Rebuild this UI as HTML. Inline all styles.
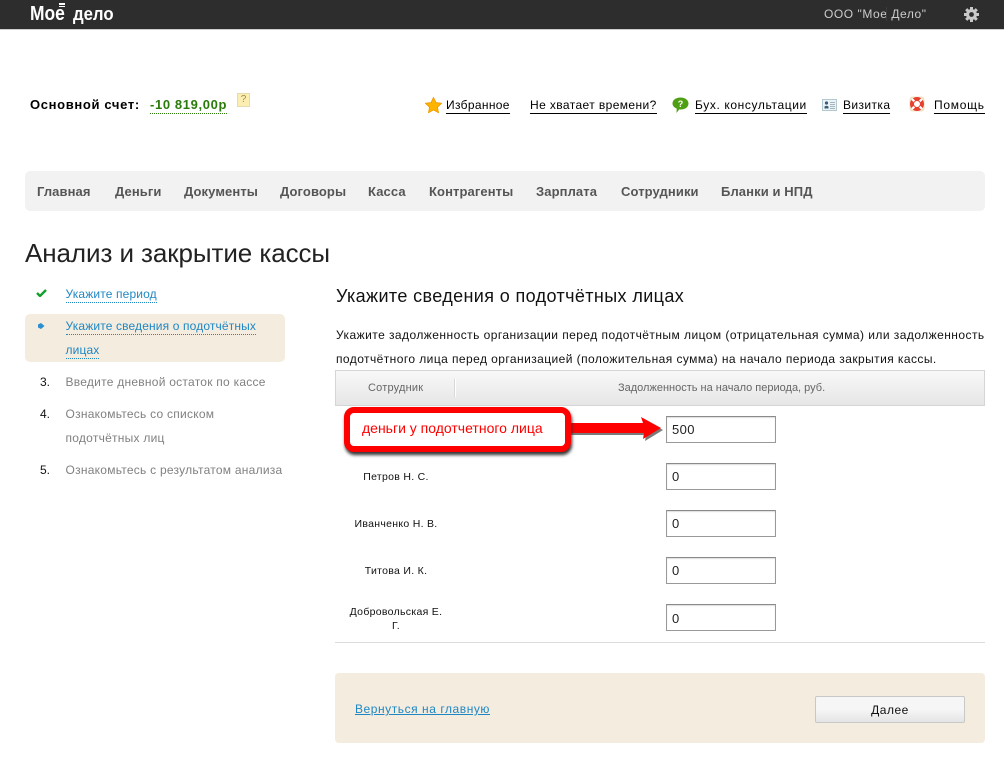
<!DOCTYPE html>
<html><head><meta charset="utf-8">
<style>
html,body{margin:0;padding:0;background:#fff;width:1004px;height:759px;overflow:hidden}
body{position:relative;font-family:"Liberation Sans",sans-serif;color:#000}
.t{position:absolute;white-space:nowrap;line-height:16px}
.b{position:absolute;box-sizing:border-box}
.top{font-size:12px;border-bottom:1px solid #000;line-height:14px;height:15px}
.nav{font-size:13px;font-weight:bold;color:#555;letter-spacing:.1px;top:184px}
.s{font-size:12px;letter-spacing:.25px;color:#808080}
.l{font-size:12px;letter-spacing:.14px;color:#1f87c4;line-height:14px;height:15px;border-bottom:1px dotted #1f87c4}
.n{font-size:12px;color:#111;left:40px}
.p{font-size:12px;letter-spacing:.45px;color:#111}
.e{font-size:10.5px;letter-spacing:.3px;text-align:center;left:336px;width:120px;color:#111}
.i{position:absolute;box-sizing:border-box;left:666px;width:110px;height:27px;border:1px solid #999;border-top-color:#8a8a8a;box-shadow:inset 0 1px 1px #ddd;background:#fff;font-size:13px;line-height:25px;padding-left:5px;color:#222;letter-spacing:.4px}
</style></head><body>
<div class="b" style="left:0;top:0;width:1004px;height:30px;background:#2d2d2d;border-bottom:1px solid #ccc"></div>
<div class="t" style="left:30px;top:3px;font-size:20px;font-weight:bold;color:#fff;line-height:23px;transform:scaleX(.87);transform-origin:0 0">Мое</div>
<div class="t" style="left:73px;top:4px;font-size:18px;font-weight:bold;color:#fff;line-height:21px;transform:scaleX(.93);transform-origin:0 0">дело</div>
<div class="b" style="left:59px;top:3px;width:6px;height:1.500px;background:#fff"></div>
<div class="b" style="left:59px;top:5.500px;width:6px;height:1.500px;background:#fff"></div>
<div class="t" style="left:824px;top:6px;font-size:12px;color:#ccc;letter-spacing:.55px">ООО "Мое Дело"</div>
<div class="b" style="left:886px;top:7px;width:1px;height:14px;background:#3c3c3c"></div>
<svg style="position:absolute;left:962.500px;top:5.500px" width="17" height="17" viewBox="0 0 17 17"><circle cx="8.5" cy="8.5" r="3.9" fill="none" stroke="#c8c8c8" stroke-width="3"/><g stroke="#c8c8c8" stroke-width="3"><path d="M8.5 1v3M8.5 13v3M1 8.5h3M13 8.5h3M3.2 3.2l2 2M11.800 11.800l2 2M3.200 13.800l2-2M11.800 5.200l2-2"/></g></svg>

<div class="t" style="left:30px;top:97px;font-size:13px;font-weight:bold;letter-spacing:.65px">Основной счет:</div>
<div class="t" style="left:150px;top:97px;font-size:13px;font-weight:bold;color:#2a7a0c;letter-spacing:.63px;height:16px;border-bottom:1px dotted #2a7a0c">-10 819,00р</div>
<div class="b" style="left:237px;top:93px;width:13px;height:14px;background:#fbeeb0;border:1px solid #e4dcae;font-size:10px;line-height:12px;text-align:center;color:#a08d45">?</div>

<svg style="position:absolute;left:425px;top:97px" width="17" height="16" viewBox="0 0 19 18"><path d="M9.500 .5l2.700 5.800 6.300.8-4.600 4.300 1.200 6.200-5.600-3.100-5.600 3.100 1.200-6.200L.5 7.100l6.300-.8z" fill="#ffb400" stroke="#f09a00"/></svg>
<div class="t top" style="left:446px;top:98px;letter-spacing:.33px">Избранное</div>
<div class="t top" style="left:530px;top:98px;letter-spacing:.4px">Не хватает времени?</div>
<svg style="position:absolute;left:671px;top:97px" width="19" height="17" viewBox="0 0 18 17"><path d="M9 .5c4.700 0 8 2.500 8 6s-3.300 6-7.500 6c-.7 0-1.300 0-1.800-.1L5 16l.2-4.500C2.500 10.500 1 8.700 1 6.500 1 3 4.300.5 9 .5z" fill="#4f9f12"/><text x="9" y="10" font-size="9" font-weight="bold" fill="#fff" text-anchor="middle" font-family="Liberation Sans">?</text></svg>
<div class="t top" style="left:695px;top:98px;letter-spacing:.62px">Бух. консультации</div>
<svg style="position:absolute;left:822px;top:99px" width="15" height="12" viewBox="0 0 15 12"><rect x=".5" y=".5" width="14" height="11" fill="#eaf3f6" stroke="#b4c8d0"/><circle cx="4.500" cy="4" r="1.600" fill="#3f5a78"/><path d="M2.500 9.500V7.500q2-1.500 4 0v2z" fill="#3f5a78"/><path d="M8 3.500h5M8 5.500h5M8 7.500h5M8 9.500h5" stroke="#a6b4bc"/></svg>
<div class="t top" style="left:843px;top:98px;letter-spacing:.4px">Визитка</div>
<svg style="position:absolute;left:909px;top:96px" width="16" height="16" viewBox="0 0 16 16"><rect x=".5" y=".5" width="15" height="15" rx="3" fill="#f3e3c6"/><circle cx="8" cy="8" r="5" fill="#fff" stroke="#e8402f" stroke-width="4"/><path d="M3 3l2.300 2.300M13 3l-2.300 2.300M3 13l2.300-2.300M13 13l-2.300-2.300" stroke="#fff" stroke-width="2.200"/></svg>
<div class="t top" style="left:934px;top:98px;letter-spacing:.72px">Помощь</div>

<div class="b" style="left:25px;top:171px;width:960px;height:40px;background:#f2f2f2;border-radius:5px"></div>
<div class="t nav" style="left:37px">Главная</div>
<div class="t nav" style="left:115px">Деньги</div>
<div class="t nav" style="left:184px">Документы</div>
<div class="t nav" style="left:280px">Договоры</div>
<div class="t nav" style="left:368px">Касса</div>
<div class="t nav" style="left:429px">Контрагенты</div>
<div class="t nav" style="left:536px">Зарплата</div>
<div class="t nav" style="left:621px">Сотрудники</div>
<div class="t nav" style="left:721px">Бланки и НПД</div>

<div class="t" style="left:25px;top:238px;font-size:26px;line-height:30px;color:#222;letter-spacing:-.08px">Анализ и закрытие кассы</div>

<div class="b" style="left:25px;top:314px;width:260px;height:48px;background:#f3ecdf;border-radius:5px"></div>
<svg style="position:absolute;left:36px;top:289px" width="11" height="8" viewBox="0 0 11 8"><path d="M1 4l3 3 6-6" fill="none" stroke="#12a02c" stroke-width="2.400"/></svg>
<svg style="position:absolute;left:37px;top:322px" width="8" height="8" viewBox="0 0 8 8"><path d="M4 1l3.500 3L4 7 1 5.500V2.500z" fill="#2b8fd0"/></svg>
<div class="t l" style="left:65.500px;top:287px">Укажите период</div>
<div class="t l" style="left:65.500px;top:319px">Укажите сведения о подотчётных</div>
<div class="t l" style="left:65.500px;top:343px">лицах</div>
<div class="t n" style="top:374px">3.</div>
<div class="t s" style="left:65.500px;top:374px">Введите дневной остаток по кассе</div>
<div class="t n" style="top:406px">4.</div>
<div class="t s" style="left:65.500px;top:406px">Ознакомьтесь со списком</div>
<div class="t s" style="left:65.500px;top:430px">подотчётных лиц</div>
<div class="t n" style="top:462px">5.</div>
<div class="t s" style="left:65.500px;top:462px">Ознакомьтесь с результатом анализа</div>

<div class="t" style="left:336px;top:286px;font-size:18px;line-height:20px;color:#111;letter-spacing:.38px">Укажите сведения о подотчётных лицах</div>
<div class="t p" style="left:336px;top:327px">Укажите задолженность организации перед подотчётным лицом (отрицательная сумма) или задолженность</div>
<div class="t p" style="left:336px;top:351px;letter-spacing:.43px">подотчётного лица перед организацией (положительная сумма) на начало периода закрытия кассы.</div>

<div class="b" style="left:335px;top:370px;width:650px;height:36px;border:1px solid #d5d5d5;background:linear-gradient(#f8f8f8,#e6e6e6)"></div>
<div class="b" style="left:454px;top:379px;width:1px;height:18px;background:#d8d8d8;box-shadow:1px 0 0 #fff"></div>
<div class="t" style="left:368px;top:380px;font-size:11px;color:#666;letter-spacing:.2px">Сотрудник</div>
<div class="t" style="left:618px;top:380px;font-size:11px;color:#666">Задолженность на начало периода, руб.</div>

<div class="t e" style="top:469px">Петров Н. С.</div>
<div class="t e" style="top:516px">Иванченко Н. В.</div>
<div class="t e" style="top:563px">Титова И. К.</div>
<div class="t e" style="top:604px">Добровольская Е.</div>
<div class="t e" style="top:618px">Г.</div>

<div class="i" style="top:416px">500</div>
<div class="i" style="top:463px">0</div>
<div class="i" style="top:510px">0</div>
<div class="i" style="top:557px">0</div>
<div class="i" style="top:604px;line-height:27px">0</div>

<svg style="position:absolute;left:565px;top:417px" width="105" height="28" viewBox="0 0 105 28"><path d="M0 6L78 6 76 0 96 11 78 22 79 16 0 16z" fill="#222" opacity=".6" transform="translate(2 2)"/><path d="M0 6L78 6 76 0 96 11 78 22 79 16 0 16z" fill="#f00"/></svg>
<div class="b" style="left:344px;top:407px;width:227px;height:45px;background:#fff;border:6px solid #f00;border-radius:10px;box-shadow:1px 3px 3px #333"></div>
<div class="t" style="left:362px;top:420px;font-size:14px;color:#f00;line-height:16px">деньги у подотчетного лица</div>

<div class="b" style="left:335px;top:642px;width:650px;height:1px;background:#dcdcdc"></div>
<div class="b" style="left:335px;top:673px;width:650px;height:70px;background:#f3ecdf;border-radius:4px"></div>
<div class="t" style="left:355px;top:701px;font-size:12px;letter-spacing:.55px;color:#1f87c4;text-decoration:underline">Вернуться на главную</div>
<div class="b" style="left:815px;top:696px;width:150px;height:27px;border:1px solid #c8c8c8;border-radius:2px;background:linear-gradient(#f6f6f6 50%,#e4e4e4);font-size:12px;line-height:26px;text-align:center;color:#111;letter-spacing:.5px">Далее</div>
</body></html>
